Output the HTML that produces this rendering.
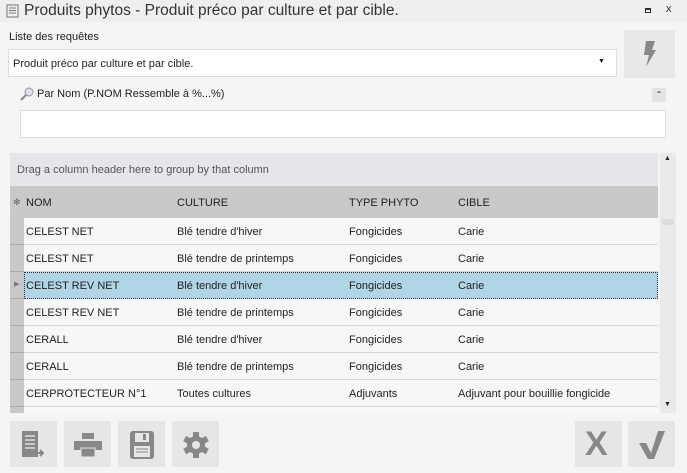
<!DOCTYPE html>
<html><head><meta charset="utf-8"><style>
*{margin:0;padding:0;box-sizing:border-box}
body{width:687px;height:473px;background:#f5f5f5;font-family:"Liberation Sans",sans-serif;font-size:11px;color:#222;position:relative;overflow:hidden}
.a{position:absolute}
.title{left:0;top:0;width:687px;height:22px;background:#efefef}
.row{position:absolute;left:24px;width:634px;height:27px;border-bottom:1px solid #d8d8d8;background:#f7f7f7}
.row span,.hdr span{position:absolute;top:8px}
.ind{position:absolute;left:10px;width:14px;height:27px;background:#c8c8c8;border-bottom:1px solid #aaa}
.btn{position:absolute;top:421px;width:47px;height:46px;background:#e6e6e6}
</style></head><body>
<div class="a title">
<svg class="a" style="left:5px;top:4px" width="14" height="14"><rect x="2" y="1" width="11" height="12" fill="none" stroke="#777"/><path d="M4 4h7M4 6.5h7M4 9h7" stroke="#777"/></svg>
<div class="a" style="left:24px;top:2px;font-size:15.5px;color:#333">Produits phytos - Produit préco par culture et par cible.</div>
<div class="a" style="left:645px;top:8px;width:6px;height:5px;border:1px solid #333;border-top-width:2px"></div>
<div class="a" style="left:666px;top:3px;font-size:11px;color:#333">x</div>
</div>
<div class="a" style="left:9px;top:31px">Liste des requêtes</div>
<div class="a" style="left:8px;top:49px;width:609px;height:28px;background:#fff;border:1px solid #ddd"><span class="a" style="left:4px;top:8px">Produit préco par culture et par cible.</span><span class="a" style="left:589px;top:8px;font-size:7px">▼</span></div>
<div class="a" style="left:624px;top:30px;width:51px;height:48px;background:#e8e8e8"><svg class="a" style="left:16px;top:11px" width="18" height="26"><path d="M6 0h9l-3 9h4l-10 17 3-12H4z" fill="#888"/></svg></div>
<svg class="a" style="left:20px;top:87px" width="14" height="14"><circle cx="9" cy="5" r="4" fill="#dde" stroke="#999"/><path d="M6 8L1 13" stroke="#888" stroke-width="2"/></svg>
<div class="a" style="left:37px;top:88px">Par Nom (P.NOM Ressemble à %...%)</div>
<div class="a" style="left:652px;top:88px;width:14px;height:14px;background:#e4e4e4;font-size:8px;text-align:center;line-height:14px">⌃</div>
<div class="a" style="left:20px;top:110px;width:646px;height:28px;background:#fff;border:1px solid #ddd"></div>
<div class="a" style="left:10px;top:153px;width:648px;height:33px;background:#e6e6ea"><span class="a" style="left:7px;top:11px;color:#555">Drag a column header here to group by that column</span></div>
<div class="a" style="left:660px;top:153px;width:16px;height:260px;background:#eaeaea"><span class="a" style="left:4px;top:2px;font-size:7px">▲</span><span class="a" style="left:4px;top:248px;font-size:7px">▼</span><div class="a" style="left:2px;top:66px;width:12px;height:6px;background:#ddd"></div></div>
<div class="a hdr" style="left:10px;top:186px;width:648px;height:32px;background:#c9c9c9">
<span style="left:3px;top:11px;font-size:9px;color:#666">✻</span><span style="left:16px;top:11px">NOM</span><span style="left:167px;top:11px">CULTURE</span><span style="left:339px;top:11px">TYPE PHYTO</span><span style="left:448px;top:11px">CIBLE</span></div>
<div class="ind" style="top:218px"></div><div class="row" style="top:218px"><span style="left:2px">CELEST NET</span><span style="left:153px">Blé tendre d'hiver</span><span style="left:325px">Fongicides</span><span style="left:434px">Carie</span></div>
<div class="ind" style="top:245px"></div><div class="row" style="top:245px"><span style="left:2px">CELEST NET</span><span style="left:153px">Blé tendre de printemps</span><span style="left:325px">Fongicides</span><span style="left:434px">Carie</span></div>
<div class="ind" style="top:272px"><span class="a" style="left:4px;top:8px;font-size:7px;color:#777">▶</span></div><div class="row" style="top:272px;background:#b0d5e6;border:1px dotted #333"><span style="left:1px;top:7px">CELEST REV NET</span><span style="left:152px;top:7px">Blé tendre d'hiver</span><span style="left:324px;top:7px">Fongicides</span><span style="left:433px;top:7px">Carie</span></div>
<div class="ind" style="top:299px"></div><div class="row" style="top:299px"><span style="left:2px">CELEST REV NET</span><span style="left:153px">Blé tendre de printemps</span><span style="left:325px">Fongicides</span><span style="left:434px">Carie</span></div>
<div class="ind" style="top:326px"></div><div class="row" style="top:326px"><span style="left:2px">CERALL</span><span style="left:153px">Blé tendre d'hiver</span><span style="left:325px">Fongicides</span><span style="left:434px">Carie</span></div>
<div class="ind" style="top:353px"></div><div class="row" style="top:353px"><span style="left:2px">CERALL</span><span style="left:153px">Blé tendre de printemps</span><span style="left:325px">Fongicides</span><span style="left:434px">Carie</span></div>
<div class="ind" style="top:380px"></div><div class="row" style="top:380px"><span style="left:2px">CERPROTECTEUR N°1</span><span style="left:153px">Toutes cultures</span><span style="left:325px">Adjuvants</span><span style="left:434px">Adjuvant pour bouillie fongicide</span></div>
<div class="ind" style="top:407px;height:6px;border:0"></div><div class="row" style="top:407px;height:6px;border:0"></div>
<div class="btn" style="left:10px"><svg class="a" style="left:12px;top:10px" width="24" height="28"><rect x="0" y="0" width="16" height="26" fill="#888"/><path d="M3 5h10M3 9h10M3 13h10M3 17h10" stroke="#ddd" stroke-width="1.5"/><path d="M12 22h9M18 19l3 3-3 3" stroke="#888" stroke-width="2" fill="none"/></svg></div>
<div class="btn" style="left:64px"><svg class="a" style="left:10px;top:12px" width="28" height="24"><rect x="8" y="0" width="12" height="6" fill="#888"/><rect x="0" y="8" width="28" height="9" fill="#888"/><rect x="7" y="15" width="14" height="9" fill="#888" stroke="#e6e6e6"/></svg></div>
<div class="btn" style="left:118px"><svg class="a" style="left:12px;top:10px" width="24" height="28"><rect x="0" y="0" width="24" height="28" rx="3" fill="#888"/><rect x="5" y="2" width="14" height="9" fill="#e6e6e6"/><rect x="13" y="3" width="3" height="6" fill="#888"/><rect x="4" y="15" width="16" height="11" fill="#e6e6e6"/><path d="M6 18h12M6 21h12" stroke="#888"/></svg></div>
<div class="btn" style="left:172px"><svg class="a" style="left:11px;top:11px" width="26" height="26" viewBox="-13 -13 26 26"><g fill="#888"><circle r="9"/><rect x="-3" y="-13" width="6" height="26"/><rect x="-3" y="-13" width="6" height="26" transform="rotate(60)"/><rect x="-3" y="-13" width="6" height="26" transform="rotate(120)"/></g><circle r="4" fill="#e6e6e6"/></svg></div>
<div class="btn" style="left:575px"><div class="a" style="left:10px;top:4px;font-size:34px;font-weight:bold;color:#888">X</div></div>
<div class="btn" style="left:628px"><svg class="a" style="left:11px;top:10px" width="26" height="28"><path d="M0 12h7l5 10L19 0h7L15 28H9z" fill="#888"/></svg></div>
</body></html>
